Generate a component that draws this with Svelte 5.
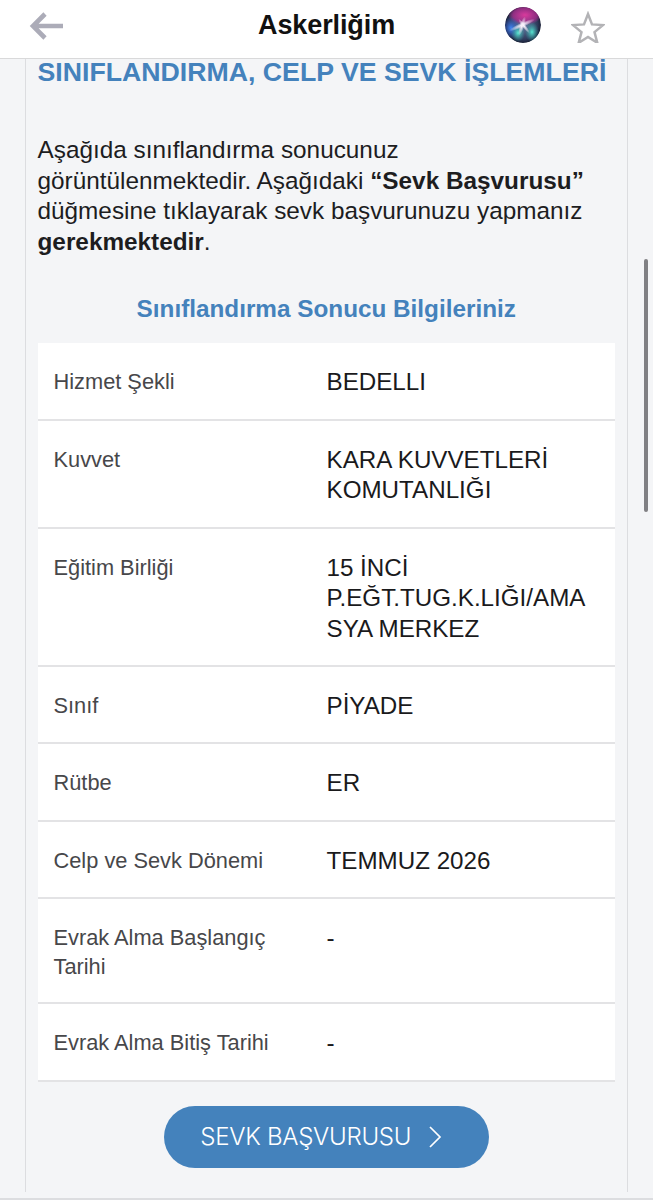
<script>
  const rows = [
    { label: 'Hizmet Şekli', lines: ['BEDELLI'], h: 'r1' },
    { label: 'Kuvvet', lines: ['KARA KUVVETLERİ', 'KOMUTANLIĞI'], h: 'r2' },
    { label: 'Eğitim Birliği', lines: ['15 İNCİ', 'P.EĞT.TUG.K.LIĞI/AMA', 'SYA MERKEZ'], h: 'r3' },
    { label: 'Sınıf', lines: ['PİYADE'], h: 'r1' },
    { label: 'Rütbe', lines: ['ER'], h: 'r1' },
    { label: 'Celp ve Sevk Dönemi', lines: ['TEMMUZ 2026'], h: 'r1' },
    { label: 'Evrak Alma Başlangıç Tarihi', lines: ['-'], h: 'r4' },
    { label: 'Evrak Alma Bitiş Tarihi', lines: ['-'], h: 'r1' }
  ];
</script>

<div class="page">
  <header class="top">
    <svg class="back" viewBox="0 0 36 30" width="36" height="30" aria-hidden="true">
      <path d="M34 15H5M16 3 4 15l12 12" fill="none" stroke="#acacb8" stroke-width="4.6" />
    </svg>
    <h1>Askerliğim</h1>
    <svg class="siri" viewBox="0 0 36 36" width="36" height="36" aria-hidden="true">
      <defs>
        <radialGradient id="bg" cx="50%" cy="50%" r="50%">
          <stop offset="0" stop-color="#6a7fa8" />
          <stop offset="0.8" stop-color="#2f3b5c" />
          <stop offset="1" stop-color="#1a2036" />
        </radialGradient>
        <radialGradient id="pink"><stop offset="0" stop-color="#d93a9c" /><stop offset="0.7" stop-color="#a82c8c" stop-opacity="0.8" /><stop offset="1" stop-color="#a82c8c" stop-opacity="0" /></radialGradient>
        <radialGradient id="teal"><stop offset="0" stop-color="#58e6d0" /><stop offset="1" stop-color="#2fa5a5" stop-opacity="0" /></radialGradient>
        <radialGradient id="blue"><stop offset="0" stop-color="#3f86f2" /><stop offset="1" stop-color="#2c4fc0" stop-opacity="0" /></radialGradient>
        <radialGradient id="core"><stop offset="0" stop-color="#fff" /><stop offset="0.5" stop-color="#f4e8f8" stop-opacity="0.6" /><stop offset="1" stop-color="#fff" stop-opacity="0" /></radialGradient>
        <clipPath id="c"><circle cx="18" cy="18" r="18" /></clipPath>
      </defs>
      <g clip-path="url(#c)">
        <circle cx="18" cy="18" r="18" fill="url(#bg)" />
        <ellipse cx="20" cy="8" rx="17" ry="10" fill="url(#pink)" />
        <ellipse cx="6" cy="21" rx="9" ry="11" fill="url(#blue)" />
        <ellipse cx="27" cy="25" rx="7" ry="10" fill="url(#teal)" />
        <ellipse cx="13" cy="26" rx="7" ry="9" fill="url(#teal)" />
        <ellipse cx="17" cy="18" rx="14" ry="2.500" fill="url(#core)" transform="rotate(-24 17 18)" />
        <ellipse cx="17" cy="19" rx="2.500" ry="10" fill="url(#core)" transform="rotate(18 17 19)" />
        <ellipse cx="19" cy="19" rx="2" ry="9" fill="url(#core)" transform="rotate(-38 19 19)" />
      </g>
    </svg>
    <svg class="star" viewBox="0 0 34 32" width="34" height="32" aria-hidden="true">
      <path d="M17 3l4 10.400 11 .7-8.500 7 2.800 10.700L17 25.900 7.700 31.800l2.800-10.700L2 14.100l11-.7z" fill="none" stroke="#b3b3b6" stroke-width="2.500" />
    </svg>
  </header>

  <main class="shell">
    <section class="card">
      <h2>SINIFLANDIRMA, CELP VE SEVK İŞLEMLERİ</h2>
      <p class="intro">
        Aşağıda sınıflandırma sonucunuz<br />
        görüntülenmektedir. Aşağıdaki <b>“Sevk Başvurusu”</b><br />
        düğmesine tıklayarak sevk başvurunuzu yapmanız<br />
        <b>gerekmektedir</b>.
      </p>
      <h3>Sınıflandırma Sonucu Bilgileriniz</h3>
      <div class="table">
        {#each rows as row}
          <div class="row {row.h}">
            <div class="label">{row.label}</div>
            <div class="value">
              {#each row.lines as line}<div>{line}</div>{/each}
            </div>
          </div>
        {/each}
      </div>
      <div class="actions">
        <button type="button">
          <span>SEVK BAŞVURUSU</span>
          <svg viewBox="0 0 14 24" width="14" height="24" aria-hidden="true">
            <path d="M2 2l10 10L2 22" fill="none" stroke="#fff" stroke-width="1.700" />
          </svg>
        </button>
      </div>
    </section>
  </main>
  <div class="scrollbar"></div>
  <div class="bottom"></div>
</div>

<style>
  :global(body) { margin: 0; background: #f4f5f7; }
  .page {
    position: relative;
    width: 653px;
    height: 1200px;
    overflow: hidden;
    background: #f4f5f7;
    font-family: "Liberation Sans", Arial, sans-serif;
  }
  .top {
    height: 58px;
    border-bottom: 1px solid #d9d9da;
    background: #fff;
    display: flex;
    align-items: center;
    padding-left: 29px;
  }
  .back { margin-top: -7px; }
  .top h1 {
    margin: 0 0 0 193px;
    font-size: 27px;
    font-weight: 700;
    color: #111;
    width: 247px;
    letter-spacing: -0.1px;
    position: relative;
    top: -4px;
  }
  .siri { margin-top: -9px; }
  .star { margin-left: 30px; margin-top: -4px; }
  .shell {
    margin: 0 25px;
    height: 1133px;
    border-left: 1.500px solid #dcdde0;
    border-right: 1.500px solid #dcdde0;
    box-sizing: border-box;
  }
  .card { padding: 0 12px 0 11.500px; }
  h2 {
    margin: 0;
    font-size: 26.700px;
    line-height: 27px;
    color: #4482bc;
    font-weight: 700;
    white-space: nowrap;
  }
  .intro {
    margin: 49px 0 0;
    font-size: 24.340px;
    line-height: 30.500px;
    color: #1d1d1f;
  }
  h3 {
    margin: 37px 0 0;
    text-align: center;
    font-size: 24.300px;
    line-height: 30px;
    color: #4482bc;
    font-weight: 700;
  }
  .table { margin-top: 19px; background: #fff; }
  .row {
    display: flex;
    box-sizing: border-box;
    border-bottom: 2px solid #e3e3e5;
    padding: 24px 15px 0 16px;
  }
  .r1 { height: 77.500px; }
  .r2 { height: 108px; }
  .r3 { height: 138px; }
  .r4 { height: 105px; }
  .label {
    width: 273px;
    flex: none;
    font-size: 21.800px;
    line-height: 29px;
    color: #47474a;
    padding-right: 30px;
    box-sizing: border-box;
  }
  .value {
    font-size: 24.200px;
    line-height: 30.500px;
    color: #1a1a1c;
    white-space: nowrap;
  }
  .actions { display: flex; justify-content: center; margin-top: 24px; }
  button {
    width: 325px;
    height: 62px;
    border: 0;
    border-radius: 31px;
    background: #4482bc;
    color: #fff;
    font-family: Inter, Roboto, sans-serif;
    font-size: 24.100px;
    font-weight: 300;
    display: flex;
    align-items: center;
    justify-content: center;
    gap: 17px;
    padding: 0 10px 0 0;
  }
  button span { letter-spacing: -0.3px; }
  .scrollbar {
    position: absolute;
    left: 644px;
    top: 259px;
    width: 4px;
    height: 253px;
    border-radius: 2px;
    background: #808084;
  }
  .bottom {
    position: absolute;
    left: 0;
    right: 0;
    bottom: 0;
    height: 2px;
    background: #dcdde0;
  }
</style>
